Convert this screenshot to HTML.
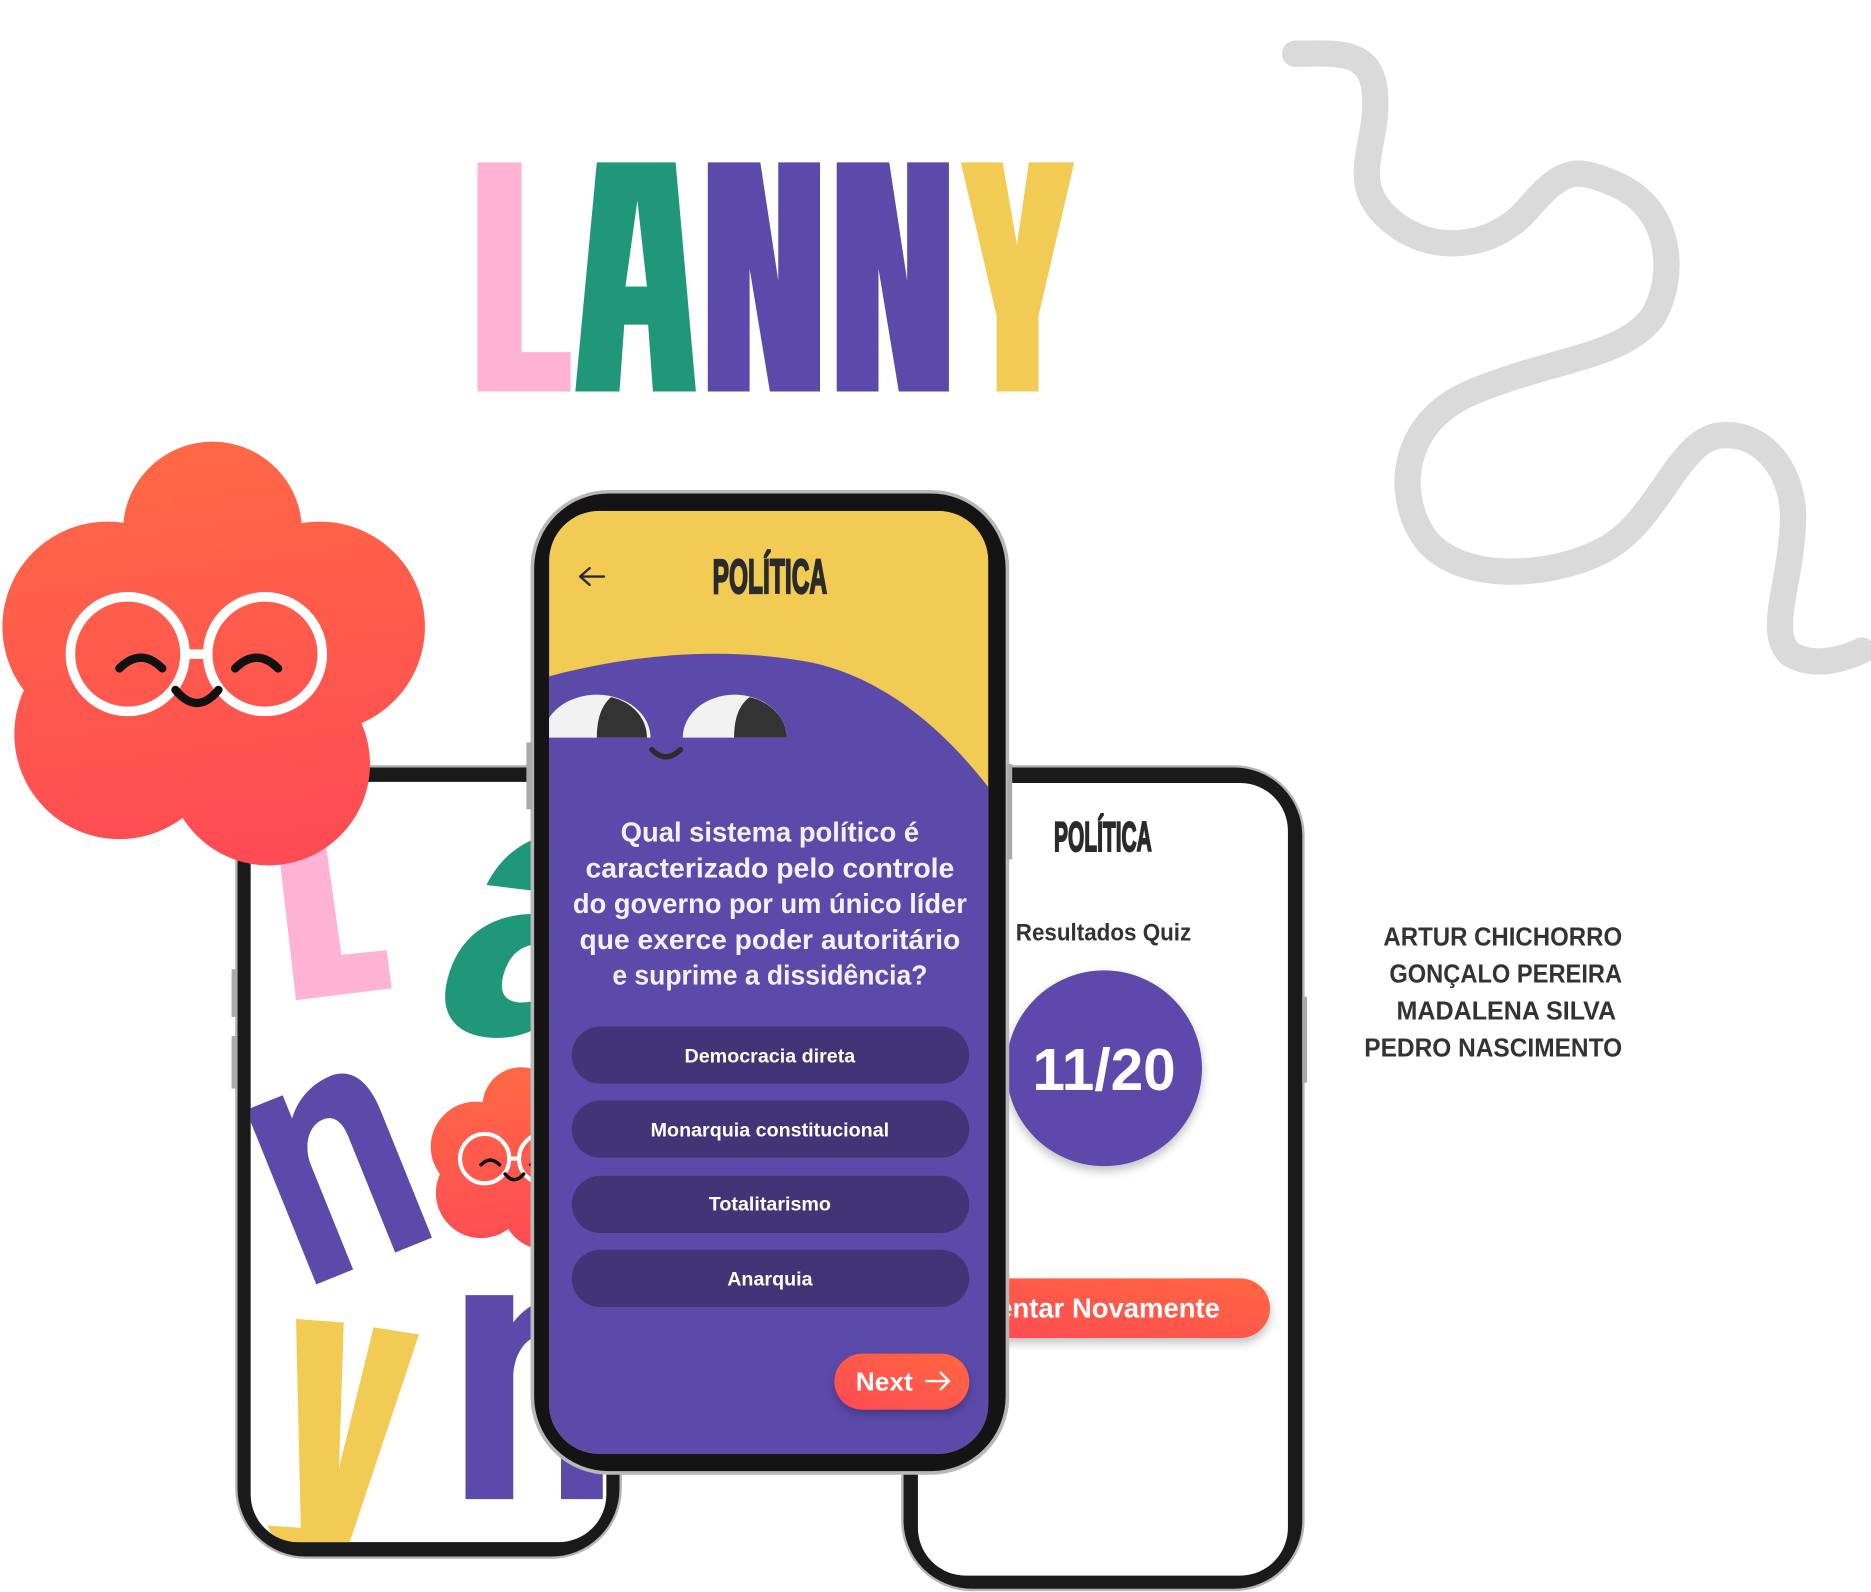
<!DOCTYPE html>
<html><head><meta charset="utf-8"><style>
html,body{margin:0;padding:0;background:#fff;width:1871px;height:1592px;overflow:hidden}
svg{display:block}
text{font-family:"Liberation Sans",sans-serif}
</style></head><body>
<svg width="1871" height="1592" viewBox="0 0 1871 1592" xmlns="http://www.w3.org/2000/svg">
<defs>
<linearGradient id="fl" gradientUnits="userSpaceOnUse" x1="180" y1="370" x2="230" y2="730"><stop offset="0" stop-color="#ff6845"/><stop offset="1" stop-color="#ff4a55"/></linearGradient>
<linearGradient id="btn" x1="0" y1="1" x2="1" y2="0"><stop offset="0" stop-color="#ff4a55"/><stop offset="1" stop-color="#ff6740"/></linearGradient>
<clipPath id="lscr"><rect x="210" y="655" width="298" height="637" rx="40"/></clipPath>
<clipPath id="mscr"><rect x="460" y="428" width="368" height="790" rx="42"/></clipPath>
<clipPath id="rscr"><rect x="769" y="656" width="310" height="664" rx="40"/></clipPath>
<filter id="sh" x="-20%" y="-20%" width="140%" height="150%"><feDropShadow dx="0" dy="4" stdDeviation="4" flood-color="#000" flood-opacity="0.25"/></filter>
<g id="flower">
<g fill="url(#fl)">
<circle cx="178" cy="445" r="75"/><circle cx="90" cy="525" r="88"/><circle cx="268" cy="525" r="88"/>
<circle cx="100" cy="615" r="88"/><circle cx="225" cy="640" r="85"/><circle cx="178" cy="548" r="120"/>
</g>
<g fill="none" stroke="#fff" stroke-width="8">
<circle cx="107" cy="548" r="48"/><circle cx="222" cy="548" r="48"/>
<path d="M155,548 L174,548"/>
</g>
<g fill="none" stroke="#111" stroke-width="7" stroke-linecap="round">
<path d="M100,560 Q118,542 136,560"/><path d="M197,560 Q215,542 233,560"/>
<path d="M147,578 Q165,600 183,578"/>
</g>
</g>
</defs>
<g transform="scale(1.19362)">
<path d="M1085,45 C1120,45 1150,40 1152,80 C1155,120 1130,150 1160,180 C1195,215 1250,210 1280,175 C1310,140 1320,140 1355,155 C1400,175 1405,230 1385,265 C1360,300 1300,300 1230,330 C1175,355 1170,410 1190,445 C1215,490 1300,485 1345,460 C1390,435 1405,370 1440,365 C1480,360 1505,400 1502,440 C1500,490 1480,530 1500,548 C1520,560 1545,552 1560,545" fill="none" stroke="#dadada" stroke-width="22" stroke-linecap="round"/>
<polygon fill="#ffb3d4" points="400,136 437,136 437,295 478,295 478,328 400,328"/>
<path fill="#21977a" fill-rule="evenodd" d="M482,328 L500,136 L566,136 L583,328 L547,328 L543,272 L523,272 L519,328 Z M524,240 L542,240 L534,168 Z"/>
<polygon fill="#5c4aab" points="593,136 637,136 652,235 652,136 687,136 687,328 645,328 628,225 628,328 593,328"/>
<polygon fill="#5c4aab" points="701,136 745,136 760,235 760,136 795,136 795,328 753,328 736,225 736,328 701,328"/>
<polygon fill="#f2cb55" points="805,136 840,136 852,205 862,136 900,136 870,265 870,328 835,328 835,265"/>

<rect x="198" y="642" width="322" height="663" rx="58" fill="#1a1a1a" stroke="#b5b5b5" stroke-width="2"/>
<rect x="194" y="812" width="5" height="40" fill="#aaa"/><rect x="194" y="868" width="5" height="44" fill="#aaa"/>
<rect x="210" y="655" width="298" height="637" rx="40" fill="#fff"/>
<g clip-path="url(#lscr)">
<polygon fill="#ffb3d4" points="232,700 248,838 328,828 324,796 286,800 272,700"/>
<text x="0" y="0" font-size="320" font-weight="bold" fill="#21977a" transform="translate(352,862) skewX(-14) rotate(4)">a</text>
<path fill="#5c4aab" transform="translate(206,930) rotate(-22) scale(0.95,1.05)" d="M0,150 L0,0 L35,0 L35,20 C50,3 70,0 80,0 C100,0 110,15 110,40 L110,150 L75,150 L75,50 C75,35 68,30 60,30 C45,30 35,45 35,60 L35,150 Z"/>
<g transform="translate(360,735) scale(0.43)"><use href="#flower"/></g>
<path fill="#5c4aab" transform="translate(390,1085) scale(1.0,1.14)" d="M0,150 L0,0 L40,0 L40,20 C55,3 75,0 85,0 C105,0 115,15 115,40 L115,150 L80,150 L80,50 C80,35 72,30 64,30 C50,30 40,45 40,60 L40,150 Z"/>
<polygon fill="#f2cb55" points="248,1105 288,1108 284,1230 313,1112 351,1118 292,1295 232,1295 224,1278 252,1280"/>
</g>

<rect x="756" y="642" width="336" height="690" rx="58" fill="#1a1a1a" stroke="#b5b5b5" stroke-width="2"/>
<rect x="1091" y="835" width="4" height="72" fill="#aaa"/>
<rect x="769" y="656" width="310" height="664" rx="40" fill="#fff"/>
<g clip-path="url(#rscr)">
<text x="883" y="713" font-size="35" font-weight="bold" fill="#2b2b2b" stroke="#2b2b2b" stroke-width="1.6" textLength="82" lengthAdjust="spacingAndGlyphs">POLÍTICA</text>
<text x="851" y="788" font-size="20" font-weight="bold" fill="#333" textLength="147" lengthAdjust="spacingAndGlyphs">Resultados Quiz</text>
<circle cx="925" cy="895" r="82" fill="#5c4aab" filter="url(#sh)"/>
<text x="925" y="913" font-size="50" font-weight="bold" fill="#fff" text-anchor="middle" textLength="120" lengthAdjust="spacingAndGlyphs">11/20</text>
<rect x="800" y="1071" width="264" height="50" rx="25" fill="url(#btn)" filter="url(#sh)"/>
<text x="1022" y="1104" font-size="23" font-weight="bold" fill="#fff" text-anchor="end">Tentar Novamente</text>
</g>

<rect x="446" y="412" width="398" height="822" rx="64" fill="#141414" stroke="#b8b8b8" stroke-width="3"/>
<rect x="441" y="622" width="5" height="56" fill="#aaa"/><rect x="844" y="640" width="4" height="80" fill="#aaa"/>
<g clip-path="url(#mscr)">
<rect x="460" y="428" width="368" height="790" fill="#f2cb55"/>
<path fill="#5c4aab" d="M455,1225 L455,568 C520,550 600,540 680,555 C740,568 790,610 830,662 L830,1225 Z"/>
<path d="M455,618 A45,36 0 0 1 545,618 Z" fill="#f2f2f2"/>
<path d="M500,618 C500,600 505,590 512,584 C530,588 542,602 542,618 Z" fill="#333"/>
<path d="M572,618 A43.5,36 0 0 1 659,618 Z" fill="#f2f2f2"/>
<path d="M615,618 C615,600 620,590 628,584 C646,588 659,602 659,618 Z" fill="#333"/>
<path d="M546,628 Q558,640 570,628" fill="none" stroke="#2b2b2b" stroke-width="4.5" stroke-linecap="round"/>
<path d="M486,483 L506,483 M486,483 L494,476 M486,483 L494,490" fill="none" stroke="#2b2b2b" stroke-width="2" stroke-linecap="round"/>
<text x="597" y="497" font-size="40" font-weight="bold" fill="#2b2b2b" stroke="#2b2b2b" stroke-width="1.8" textLength="96" lengthAdjust="spacingAndGlyphs">POLÍTICA</text>
<g font-size="23" font-weight="bold" fill="#f4f0ff" text-anchor="middle">
<text x="645" y="705" textLength="250" lengthAdjust="spacingAndGlyphs">Qual sistema político é</text>
<text x="645" y="735" textLength="309" lengthAdjust="spacingAndGlyphs">caracterizado pelo controle</text>
<text x="645" y="765" textLength="330" lengthAdjust="spacingAndGlyphs">do governo por um único líder</text>
<text x="645" y="795" textLength="319" lengthAdjust="spacingAndGlyphs">que exerce poder autoritário</text>
<text x="645" y="825" textLength="264" lengthAdjust="spacingAndGlyphs">e suprime a dissidência?</text>
</g>
<g fill="#413477">
<rect x="479" y="860" width="333" height="48" rx="24"/>
<rect x="479" y="922" width="333" height="48" rx="24"/>
<rect x="479" y="985" width="333" height="48" rx="24"/>
<rect x="479" y="1047" width="333" height="48" rx="24"/>
</g>
<g font-size="16.5" font-weight="bold" fill="#fff" text-anchor="middle">
<text x="645" y="890">Democracia direta</text>
<text x="645" y="952">Monarquia constitucional</text>
<text x="645" y="1014">Totalitarismo</text>
<text x="645" y="1077">Anarquia</text>
</g>
<rect x="699" y="1134" width="113" height="47" rx="23.5" fill="url(#btn)" filter="url(#sh)"/>
<text x="717" y="1165" font-size="22" font-weight="bold" fill="#fff">Next</text>
<path d="M776,1157 L795,1157 M788,1150 L795,1157 L788,1164" fill="none" stroke="#fff" stroke-width="2" stroke-linecap="round"/>
</g>

<use href="#flower"/>

<g font-size="21.5" font-weight="bold" fill="#333" text-anchor="end">
<text x="1359" y="792" textLength="200" lengthAdjust="spacingAndGlyphs">ARTUR CHICHORRO</text>
<text x="1359" y="823" textLength="195" lengthAdjust="spacingAndGlyphs">GONÇALO PEREIRA</text>
<text x="1354" y="854" textLength="184" lengthAdjust="spacingAndGlyphs">MADALENA SILVA</text>
<text x="1359" y="885" textLength="216" lengthAdjust="spacingAndGlyphs">PEDRO NASCIMENTO</text>
</g>
</g>
</svg>
</body></html>
